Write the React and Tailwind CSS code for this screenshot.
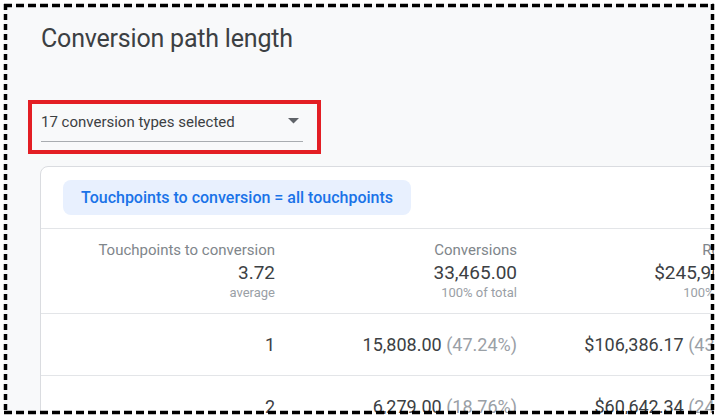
const columns = [
  { label: 'Touchpoints to conversion', total: '3.72', note: 'average', width: 'w-[234px]' },
  { label: 'Conversions', total: '33,465.00', note: '100% of total', width: 'w-[242px]' },
  { label: 'Revenue', total: '$245,967.42', note: '100% of total', width: 'w-[242px]' },
];

const rows = [
  ['1', ['15,808.00', '(47.24%)'], ['$106,386.17', '(43.25%)']],
  ['2', ['6,279.00', '(18.76%)'], ['$60,642.34', '(24.65%)']],
  ['3', ['3,912.00', '(11.69%)'], ['$29,118.50', '(11.84%)']],
];

function Frame() {
  return (
    <svg className="absolute left-0 top-0 pointer-events-none" width="721" height="419">
      <g stroke="#000" strokeWidth="3.5" fill="none">
        <line x1="4" y1="5.5" x2="714" y2="5.5" strokeDasharray="8 4" />
        <line x1="4" y1="412.5" x2="714" y2="412.5" strokeDasharray="8 4" />
        <line x1="5.5" y1="4" x2="5.5" y2="414" strokeDasharray="6 4" />
        <line x1="712.5" y1="4" x2="712.5" y2="414" strokeDasharray="6 4" />
      </g>
    </svg>
  );
}

export default function App() {
  return (
    <div className="relative w-[721px] h-[419px] bg-white pt-[4px] pl-[4px] font-['Roboto',sans-serif]">
      <div className="w-[710px] h-[410px] overflow-hidden bg-[#f8f9fa] flex flex-col items-start">
        <h1 className="shrink-0 ml-[37px] mt-[20px] text-[25px] leading-[30px] tracking-[-0.2px] text-[#3c4043] font-normal whitespace-nowrap">
          Conversion path length
        </h1>

        {/* conversion type picker, highlighted */}
        <div className="shrink-0 ml-[24px] mt-[46px] w-[293px] h-[54px] border-[4px] border-[#e31e24]">
          <div className="ml-[9px] mt-[8px] w-[262px] h-[30px] border-b border-[#a8acb0] flex items-start justify-between">
            <span className="text-[15px] leading-[20px] text-[#3c4043]">17 conversion types selected</span>
            <svg className="mt-[6px] mr-[4px]" width="11" height="6" viewBox="0 0 11 6">
              <path d="M0 0 L11 0 L5.5 5.5 Z" fill="#5f6368" />
            </svg>
          </div>
        </div>

        <div className="ml-[36px] mt-[12px] w-[760px] shrink-0 bg-white border border-[#dadce0] rounded-tl-[8px]">
          <div className="pl-[22px] py-[13px] border-b border-[#e3e5e8]">
            <span className="inline-flex items-center h-[35px] px-[18px] rounded-[8px] bg-[#e8f0fe] text-[#1a73e8] text-[16px] leading-[20px] font-medium whitespace-nowrap">
              Touchpoints to conversion = all touchpoints
            </span>
          </div>

          <div className="flex pt-[11px] pb-[12px] border-b border-[#e3e5e8]">
            {columns.map((c) => (
              <div key={c.label} className={`${c.width} shrink-0 flex flex-col items-end whitespace-nowrap`}>
                <span className="text-[15px] leading-[20px] text-[#80868b]">{c.label}</span>
                <span className="mt-[1px] text-[19px] leading-[24px] text-[#3c4043]">{c.total}</span>
                <span className="text-[13px] leading-[16px] text-[#9aa0a6]">{c.note}</span>
              </div>
            ))}
          </div>

          {rows.map(([n, conv, rev]) => (
            <div key={n} className="flex items-center h-[62px] border-b border-[#e3e5e8] text-[18px] leading-[24px] text-[#3c4043] whitespace-nowrap">
              <div className="w-[234px] shrink-0 text-right">{n}</div>
              <div className="w-[242px] shrink-0 text-right">
                {conv[0]} <span className="text-[#9aa0a6]">{conv[1]}</span>
              </div>
              <div className="w-[242px] shrink-0 text-right">
                {rev[0]} <span className="text-[#9aa0a6]">{rev[1]}</span>
              </div>
            </div>
          ))}
        </div>
      </div>
      <Frame />
    </div>
  );
}
